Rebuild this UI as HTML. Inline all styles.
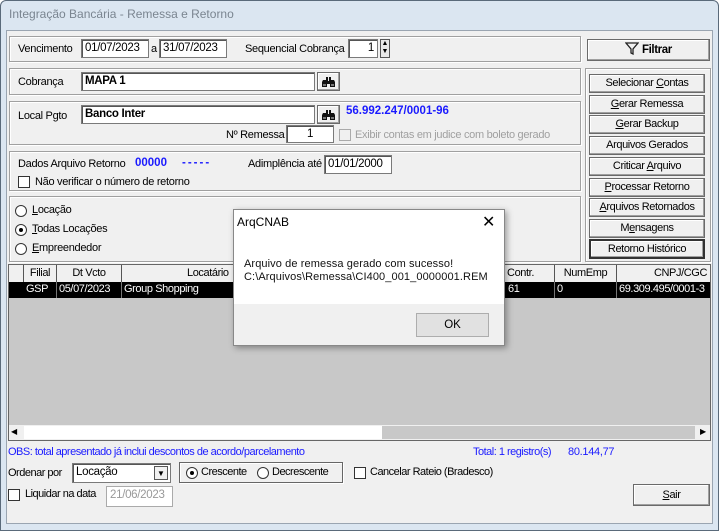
<!DOCTYPE html>
<html><head><meta charset="utf-8"><style>
*{box-sizing:border-box;margin:0;padding:0}
body{width:719px;height:531px;overflow:hidden;background:#fff;font-family:"Liberation Sans",sans-serif;font-size:11px;color:#000;position:relative}
.a{position:absolute}
.win{left:0;top:0;width:719px;height:531px;background:#dbe6f1;border:1px solid #5a6a7a;border-radius:6px 6px 0 0}
.client{left:6px;top:30px;width:707px;height:494px;background:#f0f0f0;border:1px solid #9aa5b1}
.grp{border:1px solid #a0a0a0;box-shadow:inset 1px 1px 0 #fff,1px 1px 0 #fff}
.inp{background:#fff;border:1px solid #7a7a7a;box-shadow:inset 1px 1px 0 #555;padding:2px 3px;font-size:11.5px;letter-spacing:-0.3px;white-space:nowrap}
.btn{background:#f0f0f0;border:1px solid #6a6a6a;box-shadow:inset -1px -1px 0 #a0a0a0,inset 1px 1px 0 #fff;text-align:center;font-size:11px;line-height:17px;letter-spacing:-0.4px}
.cb{width:12px;height:12px;border:1px solid #333;background:#fff}
.rad{width:12px;height:12px;border:1px solid #333;border-radius:50%;background:#fff}
.dot::after{content:"";position:absolute;left:3px;top:3px;width:4px;height:4px;background:#000;border-radius:50%}
.t{white-space:nowrap}
.l{font-size:11px;letter-spacing:-0.3px}
.bl{color:#1a1aff;font-weight:bold;font-size:11.5px}
.hd{top:265px;height:17px;border-right:1px solid #555;background:#f0f0f0;text-align:center;line-height:16px;font-size:11px;letter-spacing:-0.4px}
.cell{top:282px;height:16px;color:#fff;line-height:15px;font-size:11px;letter-spacing:-0.4px;border-right:1px solid #777;padding-left:2px;white-space:nowrap}
</style></head><body>
<div class="a win"></div>
<div class="a t" style="left:9px;top:7px;color:#7a8590;font-size:12px">Integração Bancária - Remessa e Retorno</div>
<div class="a client"></div>

<!-- Vencimento -->
<div class="a grp" style="left:9px;top:36px;width:572px;height:26px"></div>
<div class="a t l" style="left:18px;top:43px">Vencimento</div>
<div class="a inp" style="left:81px;top:39px;width:68px;height:19px">01/07/2023</div>
<div class="a t l" style="left:151px;top:43px">a</div>
<div class="a inp" style="left:159px;top:39px;width:68px;height:19px">31/07/2023</div>
<div class="a t l" style="left:245px;top:43px">Sequencial Cobrança</div>
<div class="a inp" style="left:348px;top:39px;width:30px;height:19px;text-align:right">1</div>
<div class="a" style="left:380px;top:39px;width:10px;height:19px;border:1px solid #555;background:#e8e8e8;font-size:7px;line-height:8px;text-align:center">▲<br>▼</div>
<div class="a btn" style="left:587px;top:39px;width:123px;height:22px;font-weight:bold;font-size:11.5px;line-height:20px"><svg width="14" height="13" viewBox="0 0 14 13" style="vertical-align:-2px"><path d="M1 1h12l-5 6v5l-2-1V7z" fill="none" stroke="#222" stroke-width="1.3"/></svg> Filtrar</div>

<!-- Cobrança -->
<div class="a grp" style="left:9px;top:68px;width:572px;height:27px"></div>
<div class="a t l" style="left:18px;top:76px">Cobrança</div>
<div class="a inp" style="left:81px;top:72px;width:234px;height:19px;font-weight:bold">MAPA 1</div>
<div class="a btn" style="left:317px;top:72px;width:23px;height:19px"><svg width="15" height="12" viewBox="0 0 15 12" style="margin-top:3px"><path d="M2 4h4v7H1V6zM9 4h4l1 2v5H9zM5 1h2v4H5zM8 1h2v4H8zM6 5h3v3H6z" fill="#111"/><rect x="2" y="8" width="3" height="2" fill="#777"/><rect x="10" y="8" width="3" height="2" fill="#777"/></svg></div>

<!-- Local Pgto -->
<div class="a grp" style="left:9px;top:101px;width:572px;height:44px"></div>
<div class="a t l" style="left:18px;top:110px">Local Pgto</div>
<div class="a inp" style="left:81px;top:105px;width:234px;height:19px;font-weight:bold">Banco Inter</div>
<div class="a btn" style="left:317px;top:105px;width:23px;height:19px"><svg width="15" height="12" viewBox="0 0 15 12" style="margin-top:3px"><path d="M2 4h4v7H1V6zM9 4h4l1 2v5H9zM5 1h2v4H5zM8 1h2v4H8zM6 5h3v3H6z" fill="#111"/><rect x="2" y="8" width="3" height="2" fill="#777"/><rect x="10" y="8" width="3" height="2" fill="#777"/></svg></div>
<div class="a t bl" style="left:346px;top:105px">56.992.247/0001-96</div>
<div class="a t l" style="left:226px;top:129px">Nº Remessa</div>
<div class="a inp" style="left:286px;top:125px;width:48px;height:18px;text-align:center">1</div>
<div class="a cb" style="left:339px;top:129px;border-color:#aaa;background:#f0f0f0"></div>
<div class="a t l" style="left:355px;top:129px;color:#a0a0a0">Exibir contas em judice com boleto gerado</div>

<!-- Dados -->
<div class="a grp" style="left:9px;top:151px;width:572px;height:40px"></div>
<div class="a t l" style="left:18px;top:158px">Dados Arquivo Retorno</div>
<div class="a t bl" style="left:135px;top:157px">00000</div>
<div class="a t bl" style="left:182px;top:157px;letter-spacing:2px">-----</div>
<div class="a t l" style="left:248px;top:158px">Adimplência até</div>
<div class="a inp" style="left:324px;top:155px;width:68px;height:19px">01/01/2000</div>
<div class="a cb" style="left:18px;top:176px"></div>
<div class="a t l" style="left:35px;top:176px">Não verificar o número de retorno</div>

<!-- radios -->
<div class="a grp" style="left:9px;top:196px;width:572px;height:66px"></div>
<div class="a rad" style="left:15px;top:205px"></div><div class="a t l" style="left:32px;top:204px"><u>L</u>ocação</div>
<div class="a rad dot" style="left:15px;top:224px"></div><div class="a t l" style="left:32px;top:223px"><u>T</u>odas Locações</div>
<div class="a rad" style="left:15px;top:243px"></div><div class="a t l" style="left:32px;top:242px"><u>E</u>mpreendedor</div>

<!-- right panel -->
<div class="a grp" style="left:585px;top:68px;width:126px;height:194px"></div>
<div class="a btn" style="left:589px;top:74px;width:116px;height:19px">Selecionar <u>C</u>ontas</div>
<div class="a btn" style="left:589px;top:95px;width:116px;height:19px"><u>G</u>erar Remessa</div>
<div class="a btn" style="left:589px;top:115px;width:116px;height:19px"><u>G</u>erar Backup</div>
<div class="a btn" style="left:589px;top:136px;width:116px;height:19px">Arquivos Gerados</div>
<div class="a btn" style="left:589px;top:157px;width:116px;height:19px">Criticar <u>A</u>rquivo</div>
<div class="a btn" style="left:589px;top:178px;width:116px;height:19px"><u>P</u>rocessar Retorno</div>
<div class="a btn" style="left:589px;top:198px;width:116px;height:19px"><u>A</u>rquivos Retornados</div>
<div class="a btn" style="left:589px;top:219px;width:116px;height:19px">M<u>e</u>nsagens</div>
<div class="a btn" style="left:589px;top:239px;width:116px;height:20px;border:2px solid #333;line-height:16px">Retorno Histórico</div>

<!-- grid -->
<div class="a" style="left:8px;top:264px;width:703px;height:177px;background:#c8c8c8;border:1px solid #666"></div>
<div class="a hd" style="left:9px;width:15px"></div>
<div class="a hd" style="left:24px;width:33px">Filial</div>
<div class="a hd" style="left:57px;width:65px">Dt Vcto</div>
<div class="a hd" style="left:122px;width:348px;text-align:left;padding-left:65px">Locatário</div>
<div class="a hd" style="left:470px;width:85px;text-align:right;padding-right:20px">Contr.</div>
<div class="a hd" style="left:555px;width:62px">NumEmp</div>
<div class="a hd" style="left:617px;width:93px;text-align:right;padding-right:3px;border-right:none">CNPJ/CGC</div>
<div class="a" style="left:9px;top:282px;width:701px;height:16px;background:#000"></div>
<div class="a cell" style="left:24px;width:33px">GSP</div>
<div class="a cell" style="left:57px;width:65px">05/07/2023</div>
<div class="a cell" style="left:122px;width:348px">Group Shopping</div>
<div class="a cell" style="left:470px;width:85px;padding-left:38px">61</div>
<div class="a cell" style="left:555px;width:62px">0</div>
<div class="a cell" style="left:617px;width:93px;border:none;overflow:hidden">69.309.495/0001-3</div>
<!-- hscroll -->
<div class="a" style="left:9px;top:425px;width:701px;height:15px;background:#f0f0f0"></div>
<div class="a" style="left:24px;top:426px;width:358px;height:13px;background:#fff"></div>
<div class="a" style="left:382px;top:426px;width:313px;height:13px;background:#c8c8c8"></div>
<div class="a" style="left:11px;top:427px;font-size:8px">◀</div>
<div class="a" style="left:700px;top:427px;font-size:8px">▶</div>

<!-- bottom -->
<div class="a t" style="left:8px;top:446px;color:#1a1aff;font-size:11px;letter-spacing:-0.5px">OBS: total apresentado já inclui descontos de acordo/parcelamento</div>
<div class="a t" style="left:473px;top:446px;color:#1a1aff;font-size:11px;letter-spacing:-0.5px">Total: 1 registro(s)</div>
<div class="a t" style="left:568px;top:446px;color:#1a1aff;font-size:11px;letter-spacing:-0.3px">80.144,77</div>
<div class="a t l" style="left:8px;top:467px;letter-spacing:-0.5px">Ordenar por</div>
<div class="a inp" style="left:72px;top:463px;width:99px;height:20px">Locação</div>
<div class="a" style="left:154px;top:466px;width:14px;height:14px;border:1px solid #555;background:#f0f0f0;font-size:8px;text-align:center;line-height:13px">▼</div>
<div class="a grp" style="left:179px;top:462px;width:164px;height:21px;border-color:#666"></div>
<div class="a rad dot" style="left:186px;top:467px"></div><div class="a t l" style="left:201px;top:466px;letter-spacing:-0.5px">Crescente</div>
<div class="a rad" style="left:257px;top:467px"></div><div class="a t l" style="left:272px;top:466px;letter-spacing:-0.5px">Decrescente</div>
<div class="a cb" style="left:354px;top:467px"></div><div class="a t l" style="left:370px;top:466px;letter-spacing:-0.5px">Cancelar Rateio (Bradesco)</div>
<div class="a cb" style="left:8px;top:489px"></div><div class="a t l" style="left:25px;top:488px;letter-spacing:-0.5px">Liquidar na data</div>
<div class="a inp" style="left:106px;top:486px;width:67px;height:21px;color:#999;box-shadow:none;border-color:#aaa">21/06/2023</div>
<div class="a btn" style="left:633px;top:484px;width:77px;height:22px;line-height:20px"><u>S</u>air</div>

<!-- dialog -->
<div class="a" style="left:233px;top:209px;width:272px;height:137px;background:#fff;border:1px solid #888;box-shadow:2px 2px 6px rgba(0,0,0,.35)"></div>
<div class="a" style="left:234px;top:304px;width:270px;height:41px;background:#f0f0f0"></div>
<div class="a t" style="left:237px;top:215px;font-size:12px">ArqCNAB</div>
<div class="a" style="left:482px;top:212px;font-size:16px;font-family:'DejaVu Sans',sans-serif;font-weight:200">✕</div>
<div class="a t" style="left:244px;top:258px;font-size:11px;line-height:13px;color:#111;letter-spacing:0.1px">Arquivo de remessa gerado com sucesso!<br>C:\Arquivos\Remessa\CI400_001_0000001.REM</div>
<div class="a" style="left:416px;top:313px;width:73px;height:24px;border:1px solid #adadad;background:#e1e1e1;text-align:center;line-height:22px;font-size:11.5px">OK</div>
</body></html>
